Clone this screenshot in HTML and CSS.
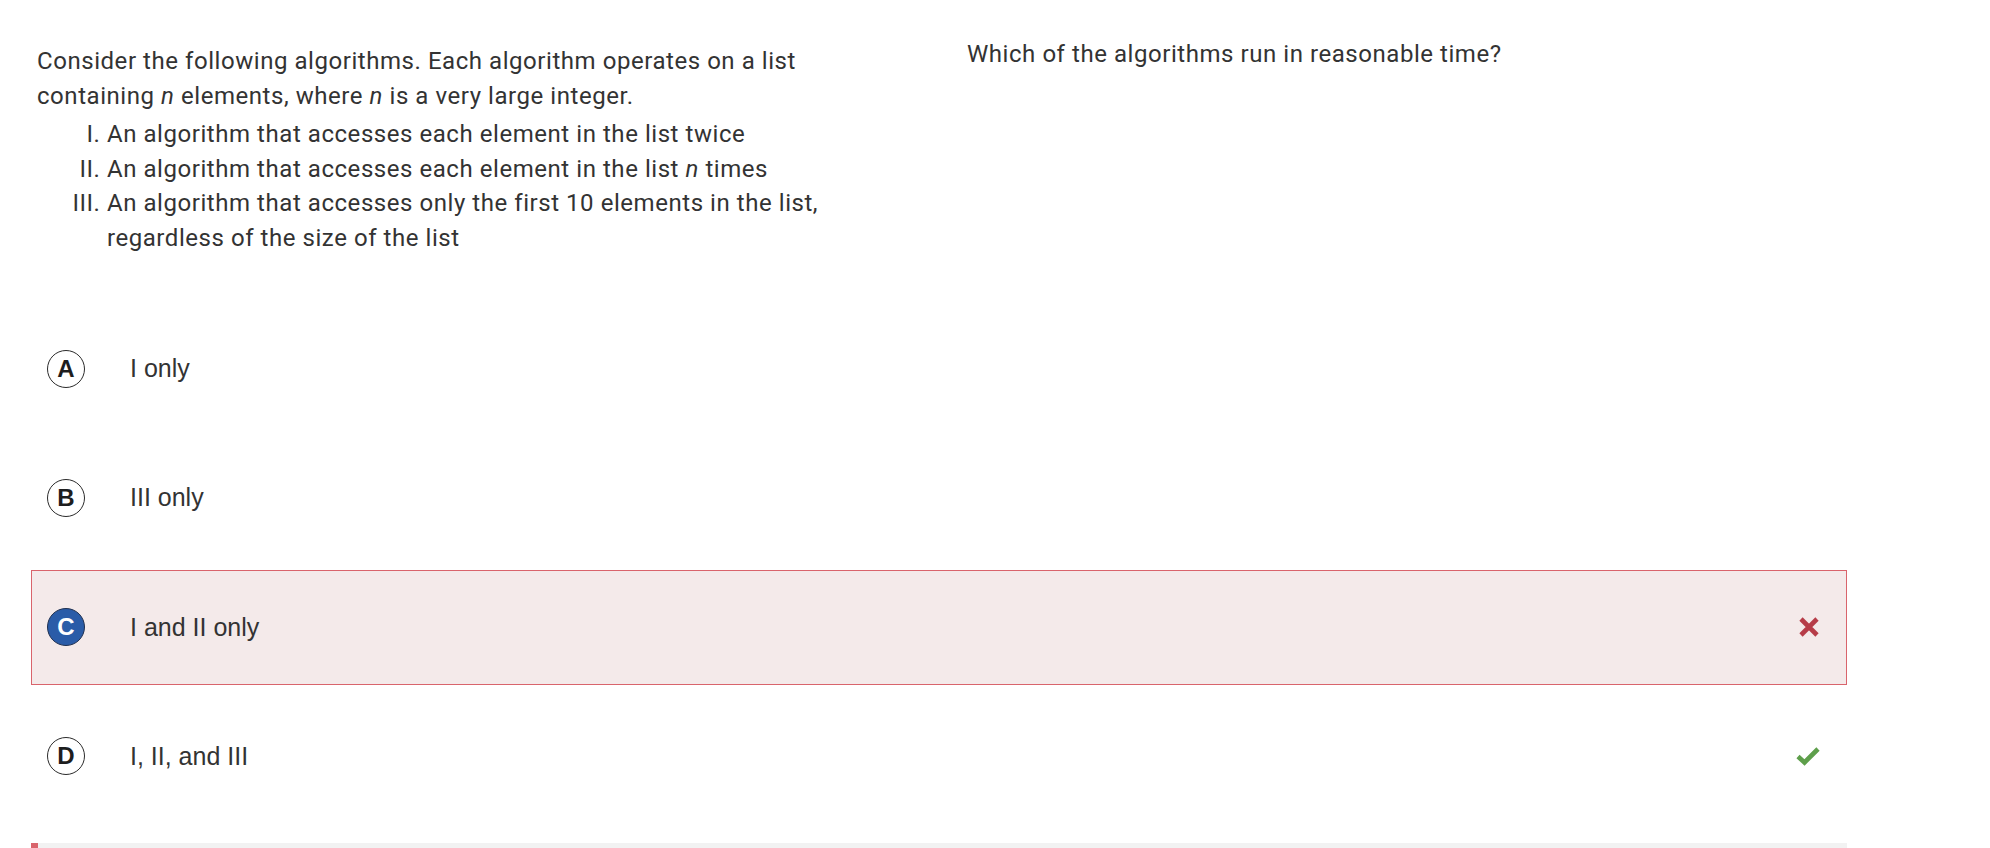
FILE: index.html
```html
<!DOCTYPE html>
<html lang="en">
<head>
<meta charset="utf-8">
<title>Question</title>
<link rel="stylesheet" href="styles.css">
</head>
<body>
<main class="page">
  <section class="stimulus">
    <div class="stim-left">
      <p class="stim-text">Consider the following algorithms. Each algorithm operates on a list containing <i>n</i> elements, where <i>n</i> is a very large integer.</p>
      <ol class="roman">
        <li>An algorithm that accesses each element in the list twice</li>
        <li>An algorithm that accesses each element in the list <i>n</i> times</li>
        <li>An algorithm that accesses only the first 10 elements in the list, regardless of the size of the list</li>
      </ol>
    </div>
    <div class="stim-right">
      <p class="stem">Which of the algorithms run in reasonable time?</p>
    </div>
  </section>

  <section class="options">
    <div class="option">
      <span class="badge">A</span>
      <span class="opt-text">I only</span>
    </div>
    <div class="option">
      <span class="badge">B</span>
      <span class="opt-text">III only</span>
    </div>
    <div class="option option-wrong">
      <span class="badge badge-selected">C</span>
      <span class="opt-text">I and II only</span>
      <svg class="mark" width="22" height="22" viewBox="0 0 22 22" aria-hidden="true">
        <path d="M3 3 L19 19 M19 3 L3 19" stroke="#b63c48" stroke-width="4.6" fill="none"/>
      </svg>
    </div>
    <div class="option">
      <span class="badge">D</span>
      <span class="opt-text">I, II, and III</span>
      <svg class="mark" width="24" height="20" viewBox="0 0 24 20" aria-hidden="true">
        <path d="M2 10.5 L8.5 16.5 L22 3" stroke="#5e9f4b" stroke-width="4.6" fill="none"/>
      </svg>
    </div>
  </section>

  <div class="progress"><span class="progress-fill"></span></div>
</main>
</body>
</html>
```

FILE: styles.css
```css
html, body {
  margin: 0;
  padding: 0;
  background: #ffffff;
}

body {
  color: #333333;
  font-family: Roboto, "Liberation Sans", Arial, sans-serif;
}

.page {
  width: 1816px;
  padding: 0 0 0 31px;
}

.stimulus {
  display: grid;
  grid-template-columns: 850px 1fr;
  column-gap: 80px;
  padding: 0 6px;
  height: 311px;
  box-sizing: border-box;
}

.stim-left {
  padding-top: 44px;
}

.stim-text,
.roman,
.stem {
  font-size: 24px;
  line-height: 34.5px;
  letter-spacing: 0.55px;
}

.stim-text {
  margin: 0;
}

.roman {
  list-style-type: upper-roman;
  margin: 4px 0 0 0;
  padding-left: 70px;
}

.stim-right {
  padding-top: 37px;
}

.stem {
  margin: 0;
}

.options {
  display: flex;
  flex-direction: column;
  gap: 14.3px;
}

.option {
  display: flex;
  align-items: center;
  height: 115px;
  box-sizing: border-box;
  border: 1px solid transparent;
  padding: 0 24px 0 15px;
  font-family: "Liberation Sans", Arial, Helvetica, sans-serif;
}

.option-wrong {
  background: #f4eaea;
  border-color: #d9646c;
}

.badge {
  width: 38px;
  height: 38px;
  box-sizing: border-box;
  border: 1.3px solid #2b2b2b;
  border-radius: 50%;
  display: flex;
  align-items: center;
  justify-content: center;
  font-size: 24px;
  font-weight: bold;
  color: #1e1e1e;
  background: #ffffff;
  flex: 0 0 auto;
}

.badge-selected {
  background: #2a5ca8;
  border-color: #1f3050;
  color: #ffffff;
}

.opt-text {
  margin-left: 45px;
  font-size: 25px;
  color: #333333;
  flex: 1 1 auto;
}

.mark {
  flex: 0 0 auto;
  margin-right: 2px;
}

.progress {
  margin-top: 29px;
  height: 10px;
  background: #f2f2f2;
  display: flex;
}

.progress-fill {
  width: 7px;
  background: #d9646c;
}
```
